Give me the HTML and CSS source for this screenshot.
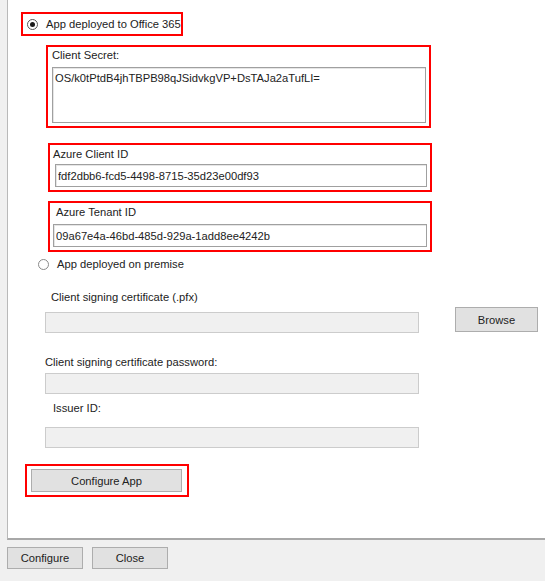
FILE: index.html
```html
<!DOCTYPE html>
<html>
<head>
<meta charset="utf-8">
<link rel="stylesheet" href="styles.css">
</head>
<body>
<div class="panel">
  <div class="mark opt365">
    <span class="radio checked"></span>
    <span class="radio-text">App deployed to Office 365</span>
  </div>

  <div class="mark secret-box">
    <div class="lbl">Client Secret:</div>
    <textarea class="field secret" readonly>OS/k0tPtdB4jhTBPB98qJSidvkgVP+DsTAJa2aTufLI=</textarea>
  </div>

  <div class="mark client-box">
    <div class="lbl">Azure Client ID</div>
    <input class="field client-input" readonly value="fdf2dbb6-fcd5-4498-8715-35d23e00df93">
  </div>

  <div class="mark tenant-box">
    <div class="lbl">Azure Tenant ID</div>
    <input class="field tenant-input" readonly value="09a67e4a-46bd-485d-929a-1add8ee4242b">
  </div>

  <div class="radio-row">
    <span class="radio"></span>
    <span class="radio-text">App deployed on premise</span>
  </div>

  <div class="lbl pfx-lbl">Client signing certificate (.pfx)</div>
  <div class="pfx-row">
    <input class="field disabled pfx-input" disabled>
    <button class="btn browse">Browse</button>
  </div>

  <div class="lbl pwd-lbl">Client signing certificate password:</div>
  <input class="field disabled pwd-input" disabled>

  <div class="lbl issuer-lbl">Issuer ID:</div>
  <input class="field disabled issuer-input" disabled>

  <div class="mark cfg-box">
    <button class="btn cfg-app">Configure App</button>
  </div>
</div>
<div class="footer">
  <button class="btn foot-btn">Configure</button>
  <button class="btn foot-btn">Close</button>
</div>
</body>
</html>
```
FILE: styles.css
```css
* { box-sizing: border-box; }
html, body {
  margin: 0;
  padding: 0;
}
body {
  width: 545px;
  height: 581px;
  overflow: hidden;
  background: #f0f0f0;
  font-family: "Liberation Sans", Arial, sans-serif;
  font-size: 11.2px;
  color: #222;
}
.panel {
  margin-left: 7px;
  width: 560px;
  height: 540px;
  background: #fff;
  border-left: 1px solid #b9b9b9;
  border-bottom: 2px solid #a8a8a8;
  padding-top: 12px;
}
.mark {
  border: 2px solid #ff0000;
}
.lbl {
  line-height: 14px;
  height: 14px;
  white-space: nowrap;
}
.radio {
  display: inline-block;
  width: 11px;
  height: 11px;
  border: 1px solid #8a8a8a;
  border-radius: 50%;
  background: #fff;
  position: relative;
  flex: none;
}
.radio.checked {
  border-color: #555;
}
.radio.checked::after {
  content: "";
  position: absolute;
  left: 2px;
  top: 2px;
  width: 5px;
  height: 5px;
  border-radius: 50%;
  background: #1a1a1a;
}
.radio-text {
  white-space: nowrap;
  line-height: 14px;
}
.opt365 {
  margin-left: 13px;
  width: 162px;
  height: 24px;
  display: flex;
  align-items: center;
  padding-left: 4px;
  gap: 8px;
}
.field {
  display: block;
  font-family: inherit;
  font-size: 11.2px;
  color: #222;
  background: #fff;
  border: 1px solid #a0a0a0;
  box-shadow: inset 1px 1px 0 #e6e6e6;
  margin: 0;
  outline: none;
  resize: none;
}
.secret-box {
  margin-top: 9px;
  margin-left: 38px;
  width: 385px;
  height: 83px;
  padding: 1px 0 0 4px;
}
.secret {
  margin-top: 5px;
  width: 374px;
  height: 56px;
  padding: 3px 2px;
  line-height: 14px;
  overflow: hidden;
}
.client-box {
  margin-top: 15px;
  margin-left: 40px;
  width: 384px;
  height: 49px;
  padding: 2px 0 0 3px;
}
.client-input {
  margin-top: 3px;
  margin-left: 2px;
  width: 372px;
  height: 23px;
  padding: 0 2px;
}
.tenant-box {
  margin-top: 9px;
  margin-left: 40px;
  width: 384px;
  height: 51px;
  padding: 2px 0 0 0;
}
.tenant-box .lbl { margin-left: 6px; }
.tenant-input {
  margin-top: 5px;
  margin-left: 3px;
  width: 374px;
  height: 23px;
  padding: 0 2px;
}
.radio-row {
  margin-top: 5px;
  margin-left: 30px;
  height: 14px;
  display: flex;
  align-items: center;
  gap: 8px;
}
.disabled {
  background: #f0f0f0;
  border: 1px solid #cccccc;
  box-shadow: none;
  width: 374px;
  height: 21px;
}
.pfx-lbl {
  margin-top: 19px;
  margin-left: 43px;
}
.pfx-row {
  margin-top: 3px;
  display: flex;
  align-items: flex-start;
  height: 26px;
}
.pfx-input {
  margin-top: 5px;
  margin-left: 37px;
}
.btn {
  font-family: inherit;
  font-size: 11.2px;
  color: #222;
  background: #e1e1e1;
  border: 1px solid #adadad;
  padding: 0;
  margin: 0;
}
.browse {
  margin-left: 36px;
  width: 83px;
  height: 25px;
}
.pwd-lbl {
  margin-top: 22px;
  margin-left: 37px;
}
.pwd-input {
  margin-top: 4px;
  margin-left: 37px;
}
.issuer-lbl {
  margin-top: 7px;
  margin-left: 45px;
}
.issuer-input {
  margin-top: 12px;
  margin-left: 37px;
}
.cfg-box {
  margin-top: 16px;
  margin-left: 17px;
  width: 164px;
  height: 33px;
  padding: 3px 0 0 4px;
}
.cfg-app {
  display: block;
  width: 151px;
  height: 23px;
}
.footer {
  padding: 7px 0 0 7px;
  display: flex;
  gap: 9px;
}
.foot-btn {
  width: 76px;
  height: 22px;
}
```
